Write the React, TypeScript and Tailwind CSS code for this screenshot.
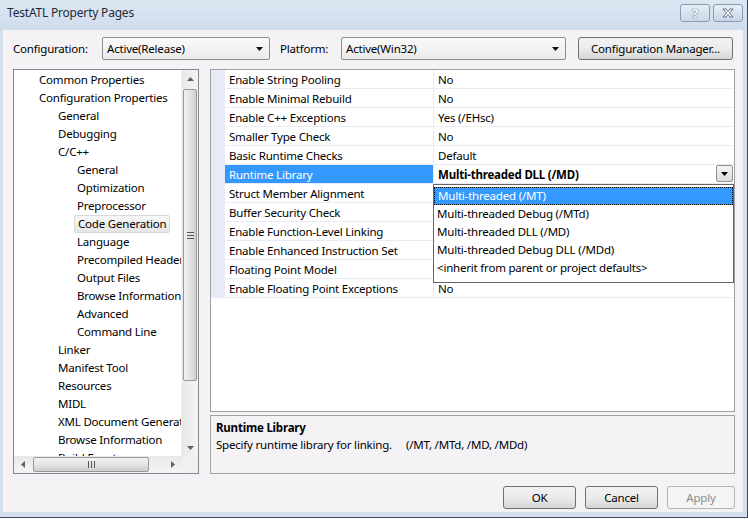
import React from "react";

const tree: [number, string, boolean?][] = [
  [0, "Common Properties"],
  [0, "Configuration Properties"],
  [1, "General"],
  [1, "Debugging"],
  [1, "C/C++"],
  [2, "General"],
  [2, "Optimization"],
  [2, "Preprocessor"],
  [2, "Code Generation", true],
  [2, "Language"],
  [2, "Precompiled Headers"],
  [2, "Output Files"],
  [2, "Browse Information"],
  [2, "Advanced"],
  [2, "Command Line"],
  [1, "Linker"],
  [1, "Manifest Tool"],
  [1, "Resources"],
  [1, "MIDL"],
  [1, "XML Document Generator"],
  [1, "Browse Information"],
  [1, "Build Events"],
];

// values under the open dropdown are hidden, so left blank
const props: [string, string][] = [
  ["Enable String Pooling", "No"],
  ["Enable Minimal Rebuild", "No"],
  ["Enable C++ Exceptions", "Yes (/EHsc)"],
  ["Smaller Type Check", "No"],
  ["Basic Runtime Checks", "Default"],
  ["Runtime Library", "Multi-threaded DLL (/MD)"],
  ["Struct Member Alignment", ""],
  ["Buffer Security Check", ""],
  ["Enable Function-Level Linking", ""],
  ["Enable Enhanced Instruction Set", ""],
  ["Floating Point Model", ""],
  ["Enable Floating Point Exceptions", "No"],
];

const options = [
  "Multi-threaded (/MT)",
  "Multi-threaded Debug (/MTd)",
  "Multi-threaded DLL (/MD)",
  "Multi-threaded Debug DLL (/MDd)",
  "<inherit from parent or project defaults>",
];

const Tri = ({ dir = "down" }: { dir?: "down" | "up" | "left" | "right" }) => {
  const pts = {
    down: "0,0 7,0 3.5,4",
    up: "0,4 7,4 3.5,0",
    left: "4,0 4,7 0,3.5",
    right: "0,0 0,7 4,3.5",
  }[dir];
  const v = dir === "down" || dir === "up";
  return (
    <svg width={v ? 7 : 4} height={v ? 4 : 7} viewBox={v ? "0 0 7 4" : "0 0 4 7"}>
      <polygon points={pts} fill="currentColor" />
    </svg>
  );
};

const Combo = ({ w, text }: { w: string; text: string }) => (
  <div
    className={`${w} h-[23px] shrink-0 flex items-center justify-between pl-[4px] pr-[6px] border border-[#8e8f8f] rounded-[2px] bg-gradient-to-b from-[#fafafa] to-[#ebebeb]`}
  >
    <span>{text}</span>
    <span className="text-[#111]">
      <Tri />
    </span>
  </div>
);

const Btn = ({ w, children, disabled }: { w: string; children: React.ReactNode; disabled?: boolean }) => (
  <div
    className={`${w} h-[23px] shrink-0 flex items-center justify-center rounded-[3px] border ${
      disabled
        ? "border-[#b5b2b5] bg-[#f4f4f4] text-[#8d8d8d]"
        : "border-[#707070] bg-gradient-to-b from-[#f2f2f2] via-[#ebebeb] to-[#d6d6d6]"
    }`}
  >
    {children}
  </div>
);

const ScrollBtn = ({ dir }: { dir: "down" | "up" | "left" | "right" }) => (
  <div className="w-[17px] h-[17px] flex items-center justify-center text-[#606060] shrink-0">
    <Tri dir={dir} />
  </div>
);

export default function App() {
  return (
    <div className="w-[748px] h-[521px] overflow-hidden bg-white font-['Noto_Sans',sans-serif] text-[11.5px] tracking-[-0.2px] leading-none text-black">
      <div className="w-[748px] h-[518px] flex flex-col bg-[#d3dfed] border-r border-b border-[#3c4552]">
        {/* title bar */}
        <div className="h-[30px] shrink-0 flex items-start bg-gradient-to-b from-[#dde7f3] to-[#cfdcec]">
          <span className="ml-[7px] mt-[7px] text-[12px] text-[#1e2a3a]">TestATL Property Pages</span>
          <div className="ml-auto mt-[4px] mr-[4px] flex gap-[3px]">
            <div className="w-[30px] h-[18px] rounded-[3px] border border-[#8a9bb2] bg-gradient-to-b from-[#e6eef7] to-[#c9d7e8] flex items-center justify-center">
              <span className="font-bold text-[13px] text-white [text-shadow:0_0_1px_#445566,0_0_1px_#445566]">?</span>
            </div>
            <div className="w-[30px] h-[18px] rounded-[3px] border border-[#8a9bb2] bg-gradient-to-b from-[#e6eef7] to-[#c9d7e8] flex items-center justify-center">
              <svg width="14" height="10" viewBox="0 0 14 10">
                <path d="M2 1 L5 1 L7 3.5 L9 1 L12 1 L8.5 5 L12 9 L9 9 L7 6.5 L5 9 L2 9 L5.5 5 Z" fill="#fff" stroke="#56657a" strokeWidth="0.9" />
              </svg>
            </div>
          </div>
        </div>

        {/* client */}
        <div className="ml-[3px] mr-[4px] h-[482px] bg-[#f5f2f5] flex flex-col">
          <div className="mt-[7px] ml-[10px] flex items-center h-[23px]">
            <span className="w-[89px] shrink-0 whitespace-nowrap">Configuration:</span>
            <Combo w="w-[168px]" text="Active(Release)" />
            <span className="ml-[10px] w-[61px] shrink-0">Platform:</span>
            <Combo w="w-[225px]" text="Active(Win32)" />
            <div className="ml-[12px]">
              <Btn w="w-[155px]">Configuration Manager...</Btn>
            </div>
          </div>

          <div className="mt-[9px] ml-[10px] flex h-[405px]">
            {/* tree */}
            <div className="w-[186px] h-[405px] border border-[#828790] bg-white flex flex-col">
              <div className="flex h-[386px]">
                <div className="w-[167px] overflow-hidden pt-[1px]">
                  {tree.map(([lvl, label, sel], i) => (
                    <div key={i} className="h-[18px] flex items-center whitespace-nowrap">
                      <span
                        className={`${lvl === 0 ? "ml-[25px]" : lvl === 1 ? "ml-[44px]" : "ml-[60px]"} ${
                          sel
                            ? "px-[3px] h-[18px] flex items-center rounded-[2px] border border-[#d9d9d9] bg-gradient-to-b from-[#f8f8f8] to-[#e6e6e6]"
                            : lvl === 2
                            ? "pl-[3px]"
                            : ""
                        }`}
                      >
                        {label}
                      </span>
                    </div>
                  ))}
                </div>
                <div className="w-[17px] flex flex-col bg-gradient-to-r from-[#e8e8e8] to-[#f5f5f5] border-l border-[#f0f0f0]">
                  <ScrollBtn dir="up" />
                  <div className="flex-1 pt-[2px]">
                    <div className="h-[292px] mx-[1px] rounded-[2px] border border-[#979797] bg-gradient-to-r from-[#f2f2f2] via-[#e4e4e4] to-[#cfcfcf] flex items-center justify-center">
                      <div className="flex flex-col gap-[2px]">
                        <div className="w-[7px] h-[1px] bg-[#555]" />
                        <div className="w-[7px] h-[1px] bg-[#555]" />
                        <div className="w-[7px] h-[1px] bg-[#555]" />
                      </div>
                    </div>
                  </div>
                  <ScrollBtn dir="down" />
                </div>
              </div>
              <div className="flex h-[17px]">
                <div className="w-[167px] flex bg-gradient-to-b from-[#e8e8e8] to-[#f5f5f5]">
                  <ScrollBtn dir="left" />
                  <div className="flex-1 pl-[2px] py-[1px]">
                    <div className="w-[116px] h-full rounded-[2px] border border-[#979797] bg-gradient-to-b from-[#f2f2f2] via-[#e4e4e4] to-[#cfcfcf] flex items-center justify-center gap-[2px]">
                      <div className="w-[1px] h-[7px] bg-[#555]" />
                      <div className="w-[1px] h-[7px] bg-[#555]" />
                      <div className="w-[1px] h-[7px] bg-[#555]" />
                    </div>
                  </div>
                  <ScrollBtn dir="right" />
                </div>
                <div className="w-[17px] bg-[#f0f0f0]" />
              </div>
            </div>

            {/* right panel */}
            <div className="ml-[11px] w-[525px] flex flex-col">
              <div className="relative h-[343px] border border-[#a0a0a0] bg-white">
                <div className="flex flex-col">
                  {props.map(([name, val], i) => {
                    const sel = name === "Runtime Library";
                    return (
                      <div key={i} className="flex h-[19px] border-b border-[#ebebf5]">
                        <div className="w-[14px] bg-[#e9eaf8]" />
                        <div
                          className={`w-[209px] flex items-center pl-[4px] pt-[1px] border-r border-[#ebebf5] ${
                            sel ? "bg-[#3399ff] text-white" : ""
                          }`}
                        >
                          {name}
                        </div>
                        <div className="flex-1 flex items-center pl-[4px] pt-[1px] relative">
                          <span className={sel ? "font-bold" : ""}>{val}</span>
                          {sel && (
                            <div className="absolute right-[1px] top-0 w-[17px] h-[17px] border border-[#8e8f8f] rounded-[2px] bg-gradient-to-b from-[#f6f6f6] to-[#dcdcdc] flex items-center justify-center">
                              <Tri />
                            </div>
                          )}
                        </div>
                      </div>
                    );
                  })}
                </div>
                <div className="absolute left-[222px] top-[114px] w-[301px] h-[99px] border border-[#646464] bg-white pt-[2px]">
                  {options.map((o, i) => (
                    <div
                      key={i}
                      className={`h-[18px] flex items-center pl-[3px] ${
                        i === 0 ? "bg-[#3399ff] text-white border border-dotted border-black" : ""
                      }`}
                    >
                      {o}
                    </div>
                  ))}
                </div>
              </div>
              <div className="mt-[3px] h-[59px] border border-[#a0a0a0] pl-[5px] pt-[3px]">
                <div className="h-[17px] flex items-center font-bold">Runtime Library</div>
                <div className="h-[17px] flex items-center whitespace-pre">
                  Specify runtime library for linking.{"     "}(/MT, /MTd, /MD, /MDd)
                </div>
              </div>
            </div>
          </div>

          <div className="mt-[12px] mr-[8px] flex justify-end gap-[9px]">
            <Btn w="w-[73px]">OK</Btn>
            <Btn w="w-[73px]">Cancel</Btn>
            <Btn w="w-[68px]" disabled>
              Apply
            </Btn>
          </div>
        </div>
      </div>
    </div>
  );
}
